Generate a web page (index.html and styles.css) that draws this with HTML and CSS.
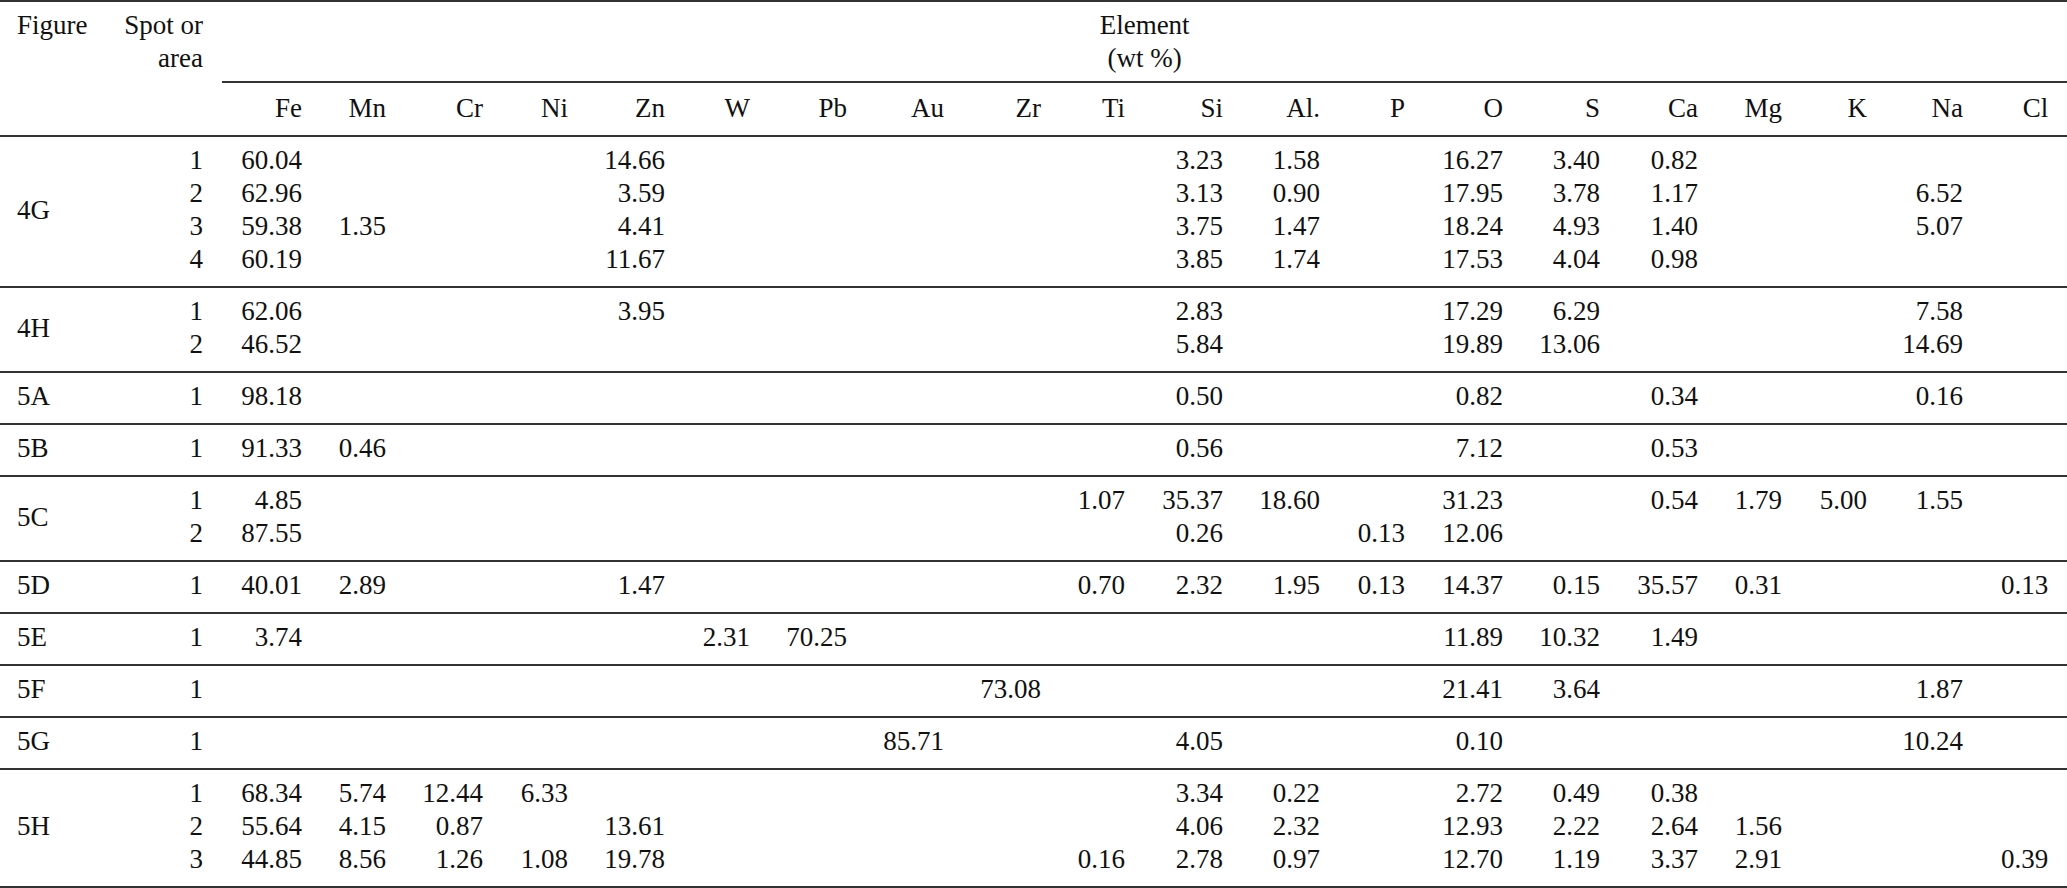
FILE: index.html
```html
<!DOCTYPE html>
<html lang="en">
<head>
<meta charset="utf-8">
<title>Element composition (wt %)</title>
<link rel="stylesheet" href="styles.css">
</head>
<body>
<table class="data">
  <colgroup>
    <col class="w110"><col class="w112">
    <col class="w99"><col class="w84"><col class="w97"><col class="w85"><col class="w97">
    <col class="w85"><col class="w97"><col class="w97"><col class="w97"><col class="w84">
    <col class="w98"><col class="w97"><col class="w85"><col class="w98"><col class="w97">
    <col class="w98"><col class="w84"><col class="w85"><col class="w96"><col class="w85">
  </colgroup>
  <thead>
    <tr class="head-a">
      <th class="fig" rowspan="2">Figure</th>
      <th class="spot" rowspan="2">Spot or<br>area</th>
      <th class="group" colspan="20">Element<br>(wt %)</th>
    </tr>
    <tr class="head-b">
      <th>Fe</th><th>Mn</th><th>Cr</th><th>Ni</th><th>Zn</th><th>W</th><th>Pb</th><th>Au</th><th>Zr</th><th>Ti</th>
      <th>Si</th><th>Al.</th><th>P</th><th>O</th><th>S</th><th>Ca</th><th>Mg</th><th>K</th><th>Na</th><th>Cl</th>
    </tr>
  </thead>
  <tbody>
    <tr><td class="fig" rowspan="4">4G</td><td>1</td><td>60.04</td><td></td><td></td><td></td><td>14.66</td><td></td><td></td><td></td><td></td><td></td><td>3.23</td><td>1.58</td><td></td><td>16.27</td><td>3.40</td><td>0.82</td><td></td><td></td><td></td><td></td></tr>
    <tr><td>2</td><td>62.96</td><td></td><td></td><td></td><td>3.59</td><td></td><td></td><td></td><td></td><td></td><td>3.13</td><td>0.90</td><td></td><td>17.95</td><td>3.78</td><td>1.17</td><td></td><td></td><td>6.52</td><td></td></tr>
    <tr><td>3</td><td>59.38</td><td>1.35</td><td></td><td></td><td>4.41</td><td></td><td></td><td></td><td></td><td></td><td>3.75</td><td>1.47</td><td></td><td>18.24</td><td>4.93</td><td>1.40</td><td></td><td></td><td>5.07</td><td></td></tr>
    <tr><td>4</td><td>60.19</td><td></td><td></td><td></td><td>11.67</td><td></td><td></td><td></td><td></td><td></td><td>3.85</td><td>1.74</td><td></td><td>17.53</td><td>4.04</td><td>0.98</td><td></td><td></td><td></td><td></td></tr>
  </tbody>
  <tbody>
    <tr><td class="fig" rowspan="2">4H</td><td>1</td><td>62.06</td><td></td><td></td><td></td><td>3.95</td><td></td><td></td><td></td><td></td><td></td><td>2.83</td><td></td><td></td><td>17.29</td><td>6.29</td><td></td><td></td><td></td><td>7.58</td><td></td></tr>
    <tr><td>2</td><td>46.52</td><td></td><td></td><td></td><td></td><td></td><td></td><td></td><td></td><td></td><td>5.84</td><td></td><td></td><td>19.89</td><td>13.06</td><td></td><td></td><td></td><td>14.69</td><td></td></tr>
  </tbody>
  <tbody>
    <tr><td class="fig">5A</td><td>1</td><td>98.18</td><td></td><td></td><td></td><td></td><td></td><td></td><td></td><td></td><td></td><td>0.50</td><td></td><td></td><td>0.82</td><td></td><td>0.34</td><td></td><td></td><td>0.16</td><td></td></tr>
  </tbody>
  <tbody>
    <tr><td class="fig">5B</td><td>1</td><td>91.33</td><td>0.46</td><td></td><td></td><td></td><td></td><td></td><td></td><td></td><td></td><td>0.56</td><td></td><td></td><td>7.12</td><td></td><td>0.53</td><td></td><td></td><td></td><td></td></tr>
  </tbody>
  <tbody>
    <tr><td class="fig" rowspan="2">5C</td><td>1</td><td>4.85</td><td></td><td></td><td></td><td></td><td></td><td></td><td></td><td></td><td>1.07</td><td>35.37</td><td>18.60</td><td></td><td>31.23</td><td></td><td>0.54</td><td>1.79</td><td>5.00</td><td>1.55</td><td></td></tr>
    <tr><td>2</td><td>87.55</td><td></td><td></td><td></td><td></td><td></td><td></td><td></td><td></td><td></td><td>0.26</td><td></td><td>0.13</td><td>12.06</td><td></td><td></td><td></td><td></td><td></td><td></td></tr>
  </tbody>
  <tbody>
    <tr><td class="fig">5D</td><td>1</td><td>40.01</td><td>2.89</td><td></td><td></td><td>1.47</td><td></td><td></td><td></td><td></td><td>0.70</td><td>2.32</td><td>1.95</td><td>0.13</td><td>14.37</td><td>0.15</td><td>35.57</td><td>0.31</td><td></td><td></td><td>0.13</td></tr>
  </tbody>
  <tbody>
    <tr><td class="fig">5E</td><td>1</td><td>3.74</td><td></td><td></td><td></td><td></td><td>2.31</td><td>70.25</td><td></td><td></td><td></td><td></td><td></td><td></td><td>11.89</td><td>10.32</td><td>1.49</td><td></td><td></td><td></td><td></td></tr>
  </tbody>
  <tbody>
    <tr><td class="fig">5F</td><td>1</td><td></td><td></td><td></td><td></td><td></td><td></td><td></td><td></td><td>73.08</td><td></td><td></td><td></td><td></td><td>21.41</td><td>3.64</td><td></td><td></td><td></td><td>1.87</td><td></td></tr>
  </tbody>
  <tbody>
    <tr><td class="fig">5G</td><td>1</td><td></td><td></td><td></td><td></td><td></td><td></td><td></td><td>85.71</td><td></td><td></td><td>4.05</td><td></td><td></td><td>0.10</td><td></td><td></td><td></td><td></td><td>10.24</td><td></td></tr>
  </tbody>
  <tbody>
    <tr><td class="fig" rowspan="3">5H</td><td>1</td><td>68.34</td><td>5.74</td><td>12.44</td><td>6.33</td><td></td><td></td><td></td><td></td><td></td><td></td><td>3.34</td><td>0.22</td><td></td><td>2.72</td><td>0.49</td><td>0.38</td><td></td><td></td><td></td><td></td></tr>
    <tr><td>2</td><td>55.64</td><td>4.15</td><td>0.87</td><td></td><td>13.61</td><td></td><td></td><td></td><td></td><td></td><td>4.06</td><td>2.32</td><td></td><td>12.93</td><td>2.22</td><td>2.64</td><td>1.56</td><td></td><td></td><td></td></tr>
    <tr><td>3</td><td>44.85</td><td>8.56</td><td>1.26</td><td>1.08</td><td>19.78</td><td></td><td></td><td></td><td></td><td>0.16</td><td>2.78</td><td>0.97</td><td></td><td>12.70</td><td>1.19</td><td>3.37</td><td>2.91</td><td></td><td></td><td>0.39</td></tr>
  </tbody>
</table>
</body>
</html>
```

FILE: styles.css
```css
html, body {
  margin: 0;
  padding: 0;
  background: #ffffff;
}

body {
  font-family: "Liberation Serif", "Times New Roman", serif;
  font-size: 27px;
  line-height: 33px;
  color: #111111;
}

.data {
  width: 2067px;
  table-layout: fixed;
  border-collapse: separate;
  border-spacing: 0;
}

.w110 { width: 110px; }
.w112 { width: 112px; }
.w84 { width: 84px; }
.w85 { width: 85px; }
.w96 { width: 96px; }
.w97 { width: 97px; }
.w98 { width: 98px; }
.w99 { width: 99px; }

.data th,
.data td {
  padding: 0 19px 0 0;
  text-align: right;
  font-weight: normal;
  white-space: nowrap;
}

.data .fig {
  text-align: left;
  padding-left: 17px;
  padding-right: 0;
}

/* header */
.head-a th {
  border-top: 2px solid #333333;
  padding-top: 7px;
  vertical-align: top;
}

.head-a .fig,
.head-a .spot {
  border-bottom: 2px solid #333333;
  padding-bottom: 10px;
}

.head-a .group {
  text-align: center;
  padding-right: 0;
  padding-bottom: 6px;
  border-bottom: 2px solid #333333;
}

.head-b th {
  padding-top: 9px;
  padding-bottom: 10px;
  border-bottom: 2px solid #333333;
}

/* body groups */
.data tbody td {
  vertical-align: middle;
}

.data tbody tr:first-child td {
  padding-top: 7px;
}

.data tbody tr:last-child td,
.data tbody td.fig {
  padding-bottom: 10px;
  border-bottom: 2px solid #333333;
}
```
